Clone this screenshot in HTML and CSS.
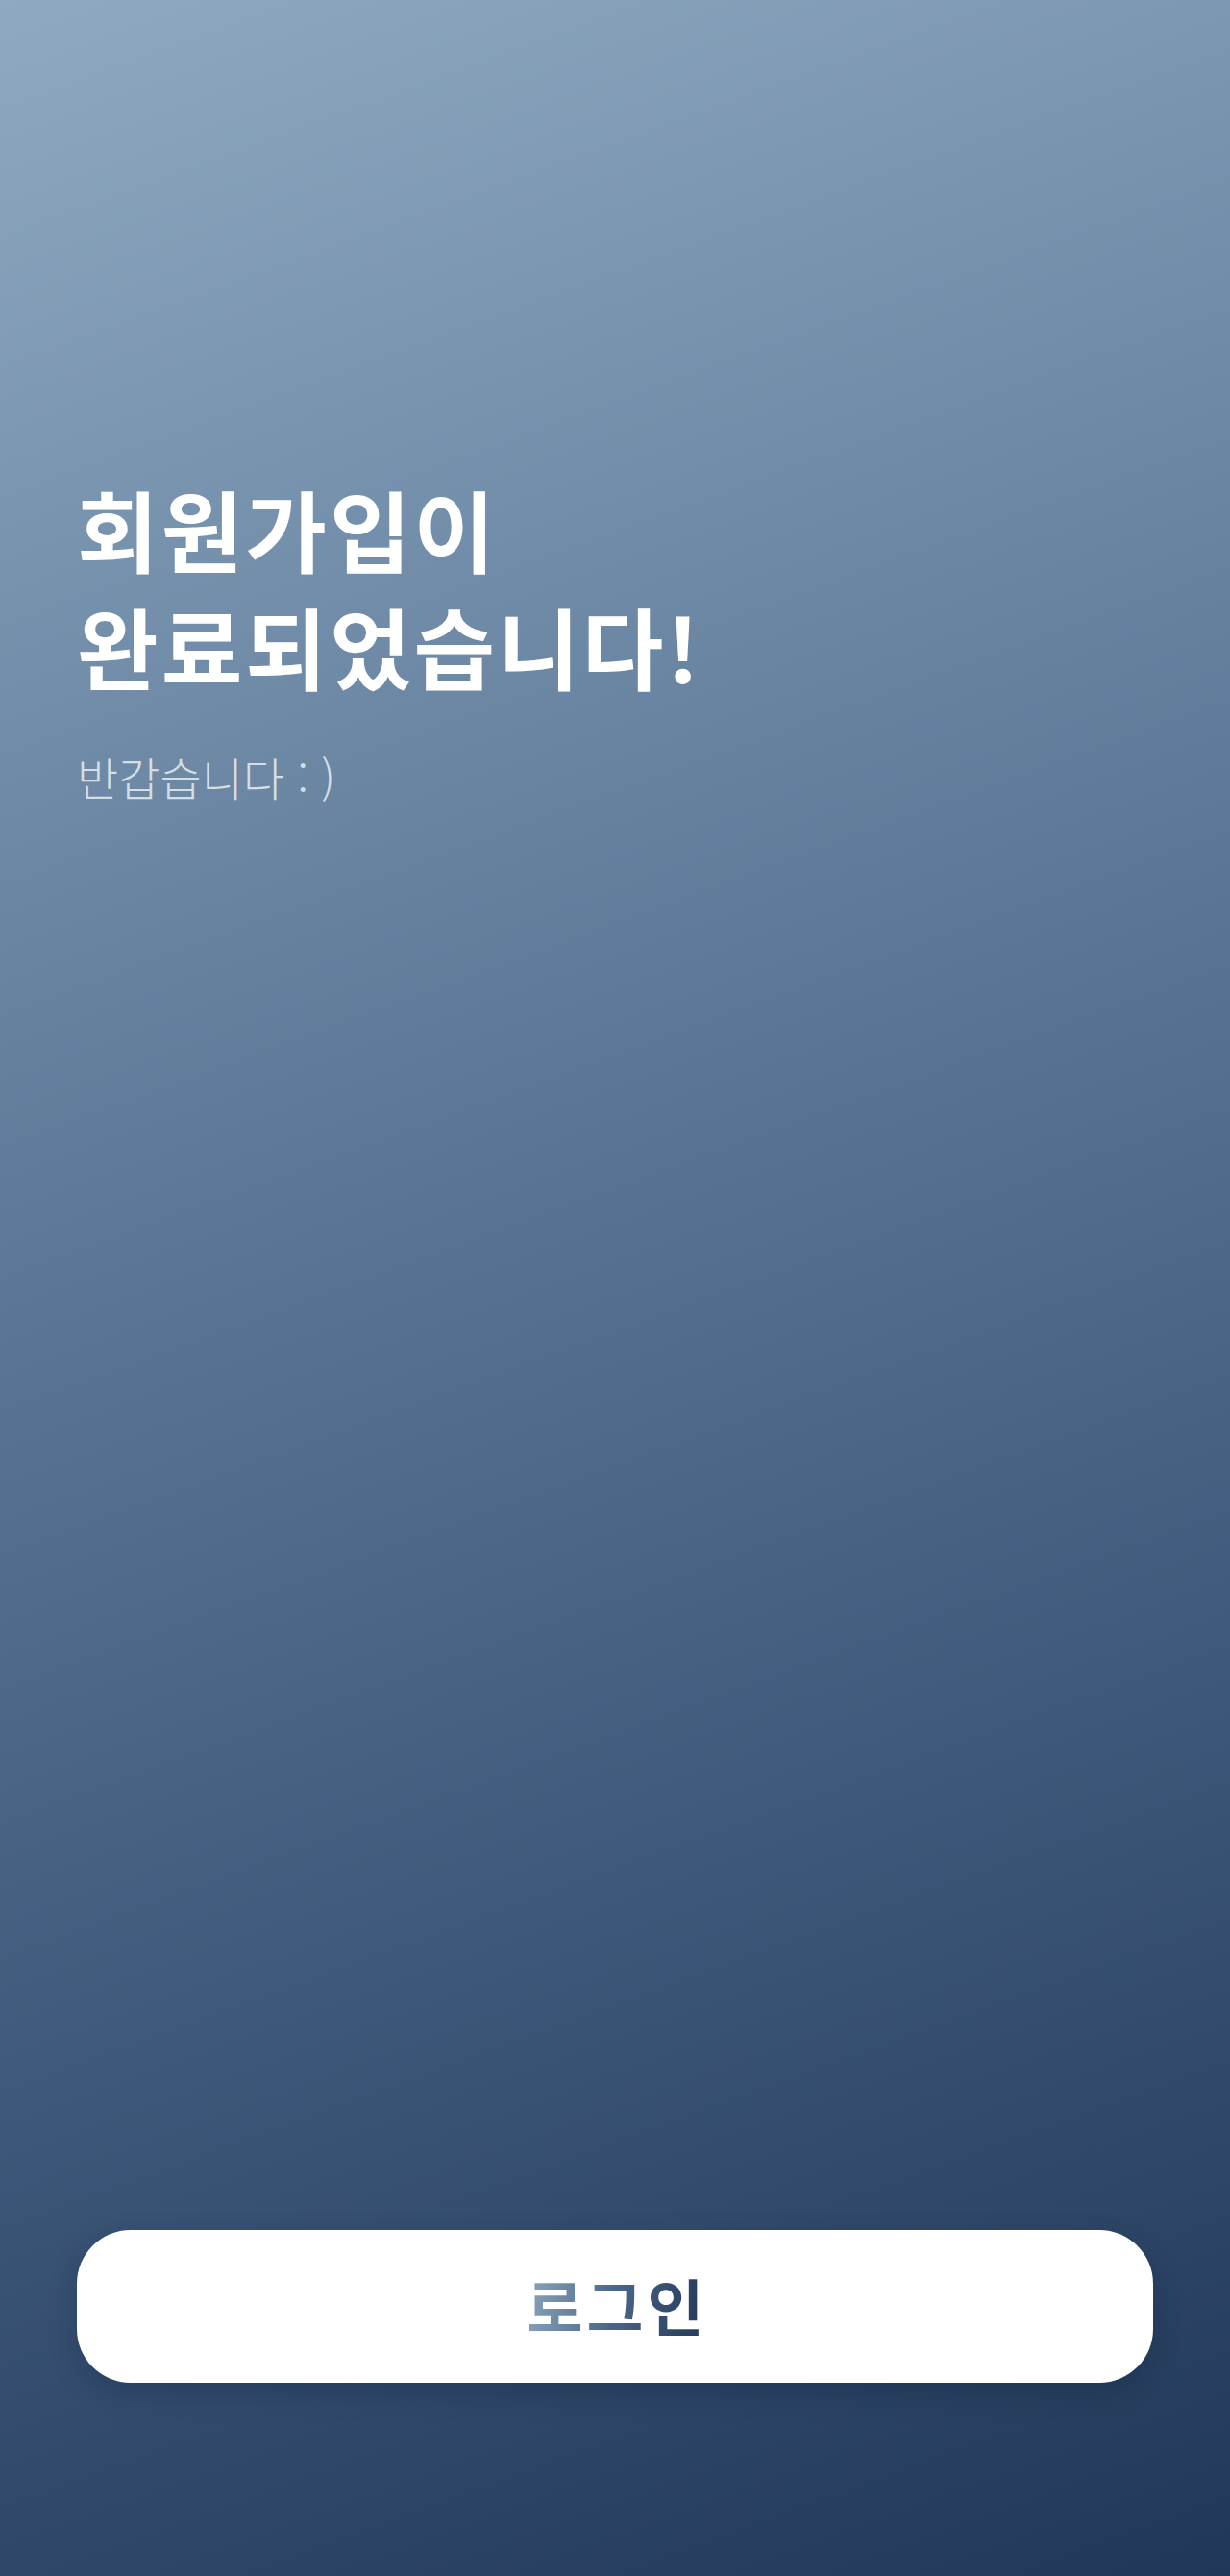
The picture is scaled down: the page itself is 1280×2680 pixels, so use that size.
FILE: index.html
```html
<!DOCTYPE html>
<html lang="ko">
<head>
<meta charset="utf-8">
<title>회원가입 완료</title>
<link rel="stylesheet" href="styles.css">
</head>
<body>
<main class="screen">
  <section class="intro">
    <h1 class="title">회원가입이<br>완료되었습니다!</h1>
    <p class="subtitle">반갑습니다 : )</p>
  </section>
  <button class="login-btn" type="button"><span class="login-label">로그인</span></button>
</main>
</body>
</html>
```

FILE: styles.css
```css
html, body {
  margin: 0;
  padding: 0;
}
body {
  font-family: "Noto Sans CJK KR", "Noto Sans", sans-serif;
}
.screen {
  box-sizing: border-box;
  min-height: 2680px;
  padding: 0 80px 201px;
  display: flex;
  flex-direction: column;
  background: linear-gradient(160deg, #8fa9c1 0%, #6a86a3 30%, #3d587a 70%, #213757 100%);
}
.intro {
  margin-top: 488px;
}
.title {
  margin: 0;
  color: #ffffff;
  font-size: 92px;
  font-weight: 700;
  line-height: 122px;
  letter-spacing: 3px;
}
.subtitle {
  margin: 46px 0 0;
  color: rgba(255, 255, 255, 0.72);
  font-size: 47px;
  font-weight: 300;
  line-height: 60px;
  letter-spacing: 0;
}
.login-btn {
  margin-top: auto;
  height: 159px;
  width: 100%;
  padding: 0 0 6px;
  border: 0;
  border-radius: 56px;
  background: #ffffff;
  box-shadow: 0 10px 28px rgba(10, 25, 50, 0.25);
  display: flex;
  align-items: center;
  justify-content: center;
  cursor: pointer;
  font-family: "Noto Sans CJK KR", "Noto Sans", sans-serif;
}
.login-label {
  font-size: 64px;
  font-weight: 600;
  letter-spacing: 4px;
  padding-left: 4px;
  background: linear-gradient(100deg, #8fa9c1 0%, #4a6687 50%, #213757 100%);
  -webkit-background-clip: text;
  background-clip: text;
  color: transparent;
}
```
